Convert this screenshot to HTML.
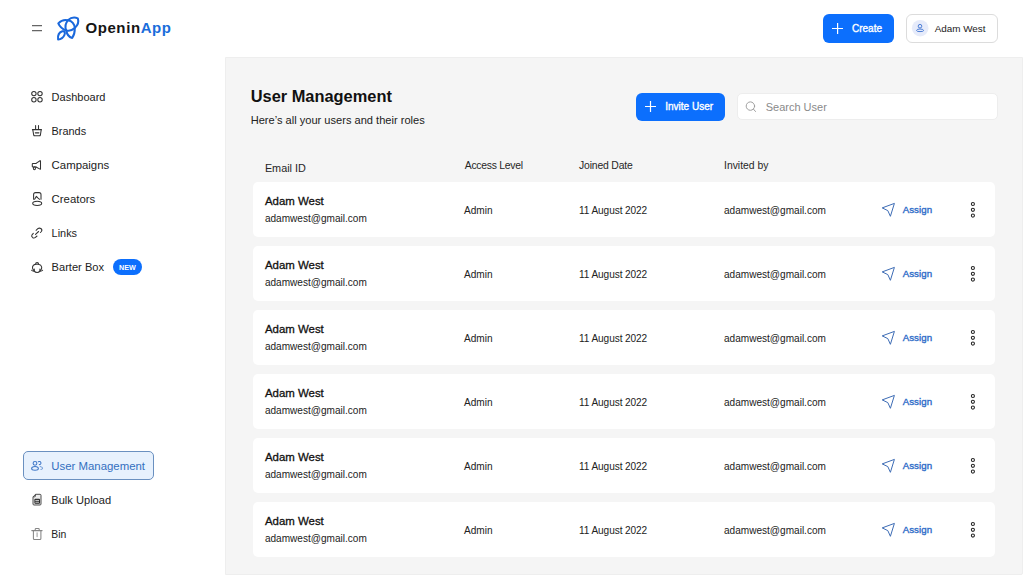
<!DOCTYPE html>
<html><head><meta charset="utf-8"><style>
html,body{margin:0;padding:0;width:1024px;height:576px;overflow:hidden;background:#fff;font-family:"Liberation Sans",sans-serif}
.t{position:absolute;line-height:1;white-space:nowrap}
#main{position:absolute;left:225px;top:57px;width:798px;height:518px;background:#f5f5f5;border:1px solid #eeeeee;box-sizing:border-box;border-radius:0 0 2px 0}
.card{position:absolute;left:253px;width:742px;height:55px;background:#fff;border-radius:5px}
#ov{position:absolute;left:0;top:0}
</style></head><body>
<div id="main"></div><div class="t" style="left:85.4px;top:20px;font-size:15px;font-weight:700;color:#151515;letter-spacing:0.6px">Openin<span style='color:#1a6ddb'>App</span></div>
<div style="position:absolute;left:823px;top:14px;width:71px;height:29px;border-radius:6px;background:#0c6ffd"></div>
<div class="t" style="left:852px;top:24px;font-size:10px;font-weight:400;color:#fff;-webkit-text-stroke:0.35px #fff">Create</div>
<div style="position:absolute;left:906px;top:14px;width:90px;height:27px;border-radius:6px;background:#fff;border:1px solid #dcdcdc"></div>
<div class="t" style="left:934.7px;top:24px;font-size:9.9px;font-weight:400;color:#1a1a1a;">Adam West</div>
<div class="t" style="left:51.6px;top:92px;font-size:11.0px;font-weight:400;color:#222;">Dashboard</div>
<div class="t" style="left:51.6px;top:126px;font-size:10.9px;font-weight:400;color:#222;">Brands</div>
<div class="t" style="left:51.6px;top:160px;font-size:11.4px;font-weight:400;color:#222;">Campaigns</div>
<div class="t" style="left:51.6px;top:194px;font-size:11.4px;font-weight:400;color:#222;">Creators</div>
<div class="t" style="left:51.6px;top:228px;font-size:10.9px;font-weight:400;color:#222;">Links</div>
<div class="t" style="left:51.6px;top:262px;font-size:11.1px;font-weight:400;color:#222;">Barter Box</div>
<div style="position:absolute;left:113px;top:259px;width:29px;height:16px;border-radius:8px;background:#0c6ffd"></div>
<div class="t" style="left:119px;top:264px;font-size:7.2px;font-weight:700;color:#fff;">NEW</div>
<div style="position:absolute;left:23px;top:451px;width:129px;height:27px;border-radius:5px;background:#e7f1fd;border:1px solid #6a90c0"></div>
<div class="t" style="left:51.3px;top:461px;font-size:11.4px;font-weight:400;color:#336fc0;">User Management</div>
<div class="t" style="left:51.3px;top:495px;font-size:11.1px;font-weight:400;color:#222;">Bulk Upload</div>
<div class="t" style="left:51.3px;top:530px;font-size:10.4px;font-weight:400;color:#222;">Bin</div>
<div class="t" style="left:250.7px;top:88px;font-size:16.4px;font-weight:700;color:#111;">User Management</div>
<div class="t" style="left:250.7px;top:115px;font-size:11.08px;font-weight:400;color:#222;">Here’s all your users and their roles</div>
<div style="position:absolute;left:636px;top:92.5px;width:89px;height:28px;border-radius:6px;background:#0c6ffd"></div>
<div class="t" style="left:665.2px;top:102px;font-size:10.04px;font-weight:400;color:#fff;-webkit-text-stroke:0.35px #fff">Invite User</div>
<div style="position:absolute;left:737px;top:93px;width:261px;height:27px;border-radius:5px;background:#fff;border:1px solid #ededed;box-sizing:border-box"></div>
<div class="t" style="left:765.7px;top:102px;font-size:11px;font-weight:400;color:#8a8a8a;">Search User</div>
<div class="t" style="left:264.9px;top:163px;font-size:10.85px;font-weight:400;color:#262626;">Email ID</div>
<div class="t" style="left:464.8px;top:161px;font-size:10.4px;font-weight:400;color:#262626;letter-spacing:-0.28px">Access Level</div>
<div class="t" style="left:579px;top:161px;font-size:10.4px;font-weight:400;color:#262626;letter-spacing:-0.17px">Joined Date</div>
<div class="t" style="left:724px;top:161px;font-size:10.4px;font-weight:400;color:#262626;">Invited by</div>
<div class="card" style="top:182px"></div>
<div class="t" style="left:264.9px;top:196px;font-size:11.45px;font-weight:400;color:#111;-webkit-text-stroke:0.3px #111">Adam West</div>
<div class="t" style="left:264.9px;top:214px;font-size:10.07px;font-weight:400;color:#222;">adamwest@gmail.com</div>
<div class="t" style="left:464px;top:206px;font-size:10.1px;font-weight:400;color:#222;">Admin</div>
<div class="t" style="left:579px;top:206px;font-size:10.1px;font-weight:400;color:#222;letter-spacing:-0.09px">11 August 2022</div>
<div class="t" style="left:724px;top:206px;font-size:10.07px;font-weight:400;color:#222;">adamwest@gmail.com</div>
<div class="t" style="left:902.7px;top:205px;font-size:9.7px;font-weight:400;color:#2c6bc8;-webkit-text-stroke:0.35px #2c6bc8;letter-spacing:0.05px">Assign</div>
<div class="card" style="top:246px"></div>
<div class="t" style="left:264.9px;top:260px;font-size:11.45px;font-weight:400;color:#111;-webkit-text-stroke:0.3px #111">Adam West</div>
<div class="t" style="left:264.9px;top:278px;font-size:10.07px;font-weight:400;color:#222;">adamwest@gmail.com</div>
<div class="t" style="left:464px;top:270px;font-size:10.1px;font-weight:400;color:#222;">Admin</div>
<div class="t" style="left:579px;top:270px;font-size:10.1px;font-weight:400;color:#222;letter-spacing:-0.09px">11 August 2022</div>
<div class="t" style="left:724px;top:270px;font-size:10.07px;font-weight:400;color:#222;">adamwest@gmail.com</div>
<div class="t" style="left:902.7px;top:269px;font-size:9.7px;font-weight:400;color:#2c6bc8;-webkit-text-stroke:0.35px #2c6bc8;letter-spacing:0.05px">Assign</div>
<div class="card" style="top:310px"></div>
<div class="t" style="left:264.9px;top:324px;font-size:11.45px;font-weight:400;color:#111;-webkit-text-stroke:0.3px #111">Adam West</div>
<div class="t" style="left:264.9px;top:342px;font-size:10.07px;font-weight:400;color:#222;">adamwest@gmail.com</div>
<div class="t" style="left:464px;top:334px;font-size:10.1px;font-weight:400;color:#222;">Admin</div>
<div class="t" style="left:579px;top:334px;font-size:10.1px;font-weight:400;color:#222;letter-spacing:-0.09px">11 August 2022</div>
<div class="t" style="left:724px;top:334px;font-size:10.07px;font-weight:400;color:#222;">adamwest@gmail.com</div>
<div class="t" style="left:902.7px;top:333px;font-size:9.7px;font-weight:400;color:#2c6bc8;-webkit-text-stroke:0.35px #2c6bc8;letter-spacing:0.05px">Assign</div>
<div class="card" style="top:374px"></div>
<div class="t" style="left:264.9px;top:388px;font-size:11.45px;font-weight:400;color:#111;-webkit-text-stroke:0.3px #111">Adam West</div>
<div class="t" style="left:264.9px;top:406px;font-size:10.07px;font-weight:400;color:#222;">adamwest@gmail.com</div>
<div class="t" style="left:464px;top:398px;font-size:10.1px;font-weight:400;color:#222;">Admin</div>
<div class="t" style="left:579px;top:398px;font-size:10.1px;font-weight:400;color:#222;letter-spacing:-0.09px">11 August 2022</div>
<div class="t" style="left:724px;top:398px;font-size:10.07px;font-weight:400;color:#222;">adamwest@gmail.com</div>
<div class="t" style="left:902.7px;top:397px;font-size:9.7px;font-weight:400;color:#2c6bc8;-webkit-text-stroke:0.35px #2c6bc8;letter-spacing:0.05px">Assign</div>
<div class="card" style="top:438px"></div>
<div class="t" style="left:264.9px;top:452px;font-size:11.45px;font-weight:400;color:#111;-webkit-text-stroke:0.3px #111">Adam West</div>
<div class="t" style="left:264.9px;top:470px;font-size:10.07px;font-weight:400;color:#222;">adamwest@gmail.com</div>
<div class="t" style="left:464px;top:462px;font-size:10.1px;font-weight:400;color:#222;">Admin</div>
<div class="t" style="left:579px;top:462px;font-size:10.1px;font-weight:400;color:#222;letter-spacing:-0.09px">11 August 2022</div>
<div class="t" style="left:724px;top:462px;font-size:10.07px;font-weight:400;color:#222;">adamwest@gmail.com</div>
<div class="t" style="left:902.7px;top:461px;font-size:9.7px;font-weight:400;color:#2c6bc8;-webkit-text-stroke:0.35px #2c6bc8;letter-spacing:0.05px">Assign</div>
<div class="card" style="top:502px"></div>
<div class="t" style="left:264.9px;top:516px;font-size:11.45px;font-weight:400;color:#111;-webkit-text-stroke:0.3px #111">Adam West</div>
<div class="t" style="left:264.9px;top:534px;font-size:10.07px;font-weight:400;color:#222;">adamwest@gmail.com</div>
<div class="t" style="left:464px;top:526px;font-size:10.1px;font-weight:400;color:#222;">Admin</div>
<div class="t" style="left:579px;top:526px;font-size:10.1px;font-weight:400;color:#222;letter-spacing:-0.09px">11 August 2022</div>
<div class="t" style="left:724px;top:526px;font-size:10.07px;font-weight:400;color:#222;">adamwest@gmail.com</div>
<div class="t" style="left:902.7px;top:525px;font-size:9.7px;font-weight:400;color:#2c6bc8;-webkit-text-stroke:0.35px #2c6bc8;letter-spacing:0.05px">Assign</div>

<svg id="ov" width="1024" height="576" viewBox="0 0 1024 576">
<path d="M32,25.6 H42 M32,30.6 H42" stroke="#666" stroke-width="1.2"/>
<g transform="translate(54,14)" fill="none" stroke="#1a68dc" stroke-width="2.05" stroke-linejoin="round" stroke-linecap="round">
<path d="M4.3,9.4 Q8.6,4.9 13.9,6.3 Q18.5,2.1 23.8,4.4 Q25.6,9.8 20.75,14.1 Q21,20 18.2,24 Q13.2,22.5 12.3,16.5 Q6.5,14.6 4.3,9.4 Z"/>
<path d="M13.9,6.3 Q20.3,7.6 20.75,14.1 Q16.8,17.8 12.3,16.5 Q9.9,11 13.9,6.3 Z"/>
<path d="M4.1,25.5 C3.6,21.4 5.4,18.2 8.3,17.3 C10.6,16.8 11.4,18.8 10.5,20.8 C9.3,23.6 6.8,25.2 4.1,25.5 Z"/></g>
<path d="M832,28.5 H843 M837.6,23 V34" stroke="#fff" stroke-width="1.2"/>
<circle cx="920.2" cy="28.2" r="8.3" fill="#e6ebfa"/>
<g fill="none" stroke="#3a70d0" stroke-width="0.9"><circle cx="920" cy="26.2" r="1.8"/><path d="M916.6,30.6 Q916.6,29 920,29 Q923.6,29 923.6,30.6 Q923.6,31.6 920,31.6 Q916.6,31.6 916.6,30.6 Z"/></g>
<g fill="none" stroke="#333" stroke-width="1.05" stroke-linecap="round" stroke-linejoin="round"><circle cx="33.9" cy="93.6" r="2.2"/><circle cx="40" cy="93.6" r="2.2"/><circle cx="33.9" cy="99.7" r="2.2"/><circle cx="40" cy="99.7" r="2.2"/></g>
<g fill="none" stroke="#333" stroke-width="1.05" stroke-linecap="round" stroke-linejoin="round"><path d="M35.6,129.3 V125.6 M38.5,125.6 V129.3"/><path d="M32.4,129.6 H41.4"/><path d="M32.8,129.8 L33.7,135 Q33.9,135.8 34.8,135.8 H39.3 Q40.2,135.8 40.4,135 L41.2,129.8"/><path d="M35.4,132.8 H38.8" stroke-width="1.3"/></g>
<g fill="none" stroke="#333" stroke-width="1.05" stroke-linecap="round" stroke-linejoin="round"><path d="M36,163.4 H32.9 Q32.3,163.4 32.3,164 V166.4 Q32.3,167 32.9,167 H36"/><path d="M36,163.4 L40,160.8 Q40.5,160.5 40.5,161.1 V168.9 Q40.5,169.4 40,169.1 L36,167"/><ellipse cx="34.4" cy="168.2" rx="1.05" ry="1.5"/></g>
<g fill="none" stroke="#333" stroke-width="1.05" stroke-linecap="round" stroke-linejoin="round"><path d="M33.6,199.3 V194.6 Q33.6,192.6 35.6,192.6 H39 Q41,192.6 41,194.6 V199.3"/><path d="M34.6,199.3 L36.4,196.4 L37.8,197.8 L39.6,199.3"/><ellipse cx="37.2" cy="203.3" rx="4.5" ry="2.1"/></g>
<g fill="none" stroke="#333" stroke-width="1.05" stroke-linecap="round" stroke-linejoin="round"><path d="M33.3,233.4 L32,234.8 Q31,236.2 32.6,237.6 Q34,238.6 35.4,237.4 L37,236"/><path d="M36.1,230.3 L37.8,228.7 Q39.3,227.6 40.8,228.5 Q42.6,229.8 41.4,231.5 L40.4,232.5"/><path d="M35.5,234.4 L38.6,231.5"/></g>
<g fill="none" stroke="#333" stroke-width="1.05" stroke-linecap="round" stroke-linejoin="round"><path d="M33.8,270.4 Q32.2,269 32.5,267 Q33,264.6 35.8,264.2 Q37.1,264 38.4,264.2 Q41.2,264.6 41.7,267 Q42,269 40.4,270.4"/><path d="M35.6,264.2 Q35.6,262.4 37.1,262.4 Q38.6,262.4 38.6,264.2"/><path d="M34.3,269 V271.1 Q35.2,272.5 37.1,272.5 Q39,272.5 39.9,271.1 V269"/><path d="M31.6,270.2 Q32.4,271.3 34.3,271.1 M42.6,270.2 Q41.8,271.3 39.9,271.1"/></g>
<g fill="none" stroke="#4079c8" stroke-width="1.05" stroke-linecap="round"><circle cx="35" cy="463.3" r="1.9"/><path d="M31.6,468.6 Q31.6,466.5 35,466.5 Q38.4,466.5 38.4,468.6 Q38.4,470.3 35,470.3 Q31.6,470.3 31.6,468.6 Z"/><path d="M38.3,461.8 Q39.2,461.2 40.2,461.6 Q41.3,462.4 40.9,463.6 Q40.4,464.7 39.3,464.6"/><path d="M40.2,466.4 Q42.6,466.9 42.6,468.3 Q42.5,469.2 40.9,469.5" stroke-opacity="0.7"/></g>
<g stroke="#444" stroke-width="0.95" stroke-linejoin="round"><path d="M35.6,494.3 H40 Q41,494.3 41,495.3 V504 Q41,505 40,505 H34 Q33,505 33,504 V496.9 Z" fill="#ececec"/><path d="M35.4,494.3 V496 Q35.4,496.8 34.6,496.8 H33" fill="none"/><rect x="34.4" y="498.8" width="5.6" height="4.9" rx="0.9" fill="#222" stroke="none"/><path d="M35.3,500.4 H39.1 M35.3,502.2 H39.1" stroke="#fff" stroke-width="0.8"/></g>
<g fill="none" stroke="#858585" stroke-width="1.05" stroke-linecap="round" stroke-linejoin="round"><path d="M31.8,530.6 H42.1"/><path d="M35.2,530.5 V529.3 Q35.2,528.5 36.1,528.5 H38.3 Q39.2,528.5 39.2,529.3 V530.5"/><path d="M33.4,530.8 V538.4 Q33.4,539.4 34.4,539.4 H39.9 Q40.9,539.4 40.9,538.4 V530.8"/><path d="M37.1,532.8 V536.6" stroke="#aaa" stroke-width="1.2"/></g>
<path d="M645,106.5 H656 M650.5,101 V112" stroke="#fff" stroke-width="1.2"/>
<g fill="none" stroke="#9a9a9a" stroke-width="0.95" stroke-linecap="round"><circle cx="750.4" cy="106.1" r="4.2"/><path d="M753.6,109.3 L755.5,111.5"/></g>
<path d="M882.2,207.9 L894.4,203.4 L890.4,216.3 L887.8,210.6 Z" transform="translate(0,0)" fill="none" stroke="#3d6cb5" stroke-width="1" stroke-linejoin="round"/>
<g fill="none" stroke="#222" stroke-width="1.05"><circle cx="972.9" cy="204" r="1.55"/><circle cx="972.9" cy="209.8" r="1.55"/><circle cx="972.9" cy="215.6" r="1.55"/></g>
<path d="M882.2,207.9 L894.4,203.4 L890.4,216.3 L887.8,210.6 Z" transform="translate(0,64)" fill="none" stroke="#3d6cb5" stroke-width="1" stroke-linejoin="round"/>
<g fill="none" stroke="#222" stroke-width="1.05"><circle cx="972.9" cy="268" r="1.55"/><circle cx="972.9" cy="273.8" r="1.55"/><circle cx="972.9" cy="279.6" r="1.55"/></g>
<path d="M882.2,207.9 L894.4,203.4 L890.4,216.3 L887.8,210.6 Z" transform="translate(0,128)" fill="none" stroke="#3d6cb5" stroke-width="1" stroke-linejoin="round"/>
<g fill="none" stroke="#222" stroke-width="1.05"><circle cx="972.9" cy="332" r="1.55"/><circle cx="972.9" cy="337.8" r="1.55"/><circle cx="972.9" cy="343.6" r="1.55"/></g>
<path d="M882.2,207.9 L894.4,203.4 L890.4,216.3 L887.8,210.6 Z" transform="translate(0,192)" fill="none" stroke="#3d6cb5" stroke-width="1" stroke-linejoin="round"/>
<g fill="none" stroke="#222" stroke-width="1.05"><circle cx="972.9" cy="396" r="1.55"/><circle cx="972.9" cy="401.8" r="1.55"/><circle cx="972.9" cy="407.6" r="1.55"/></g>
<path d="M882.2,207.9 L894.4,203.4 L890.4,216.3 L887.8,210.6 Z" transform="translate(0,256)" fill="none" stroke="#3d6cb5" stroke-width="1" stroke-linejoin="round"/>
<g fill="none" stroke="#222" stroke-width="1.05"><circle cx="972.9" cy="460" r="1.55"/><circle cx="972.9" cy="465.8" r="1.55"/><circle cx="972.9" cy="471.6" r="1.55"/></g>
<path d="M882.2,207.9 L894.4,203.4 L890.4,216.3 L887.8,210.6 Z" transform="translate(0,320)" fill="none" stroke="#3d6cb5" stroke-width="1" stroke-linejoin="round"/>
<g fill="none" stroke="#222" stroke-width="1.05"><circle cx="972.9" cy="524" r="1.55"/><circle cx="972.9" cy="529.8" r="1.55"/><circle cx="972.9" cy="535.6" r="1.55"/></g>
</svg>
</body></html>
